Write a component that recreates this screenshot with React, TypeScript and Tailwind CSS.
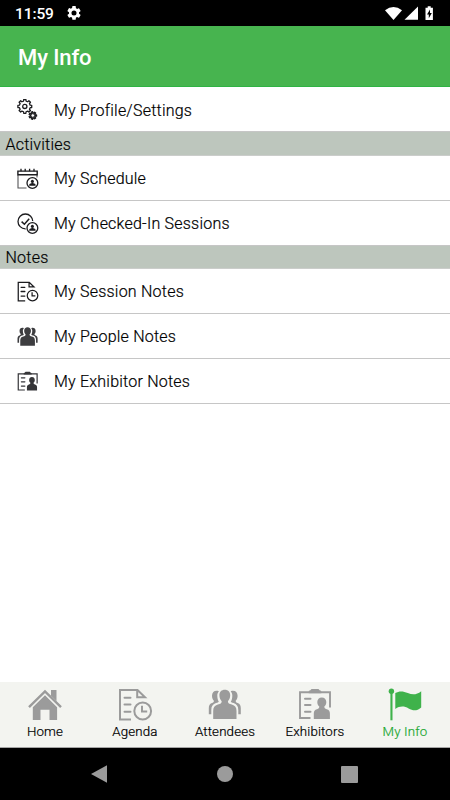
import type { ReactNode } from "react";

interface IconProps {
  className?: string;
}

// closed outline of a gear with `teeth` blunt teeth
function gearPath(cx: number, cy: number, inner: number, outer: number, teeth: number) {
  const step = (Math.PI * 2) / teeth;
  const points: string[] = [];
  for (let i = 0; i < teeth; i++) {
    const mid = i * step;
    const corners = [
      [inner, -0.29],
      [outer, -0.2],
      [outer, 0.2],
      [inner, 0.29],
    ];
    corners.forEach(([r, offset]) => {
      const a = mid + offset * step;
      points.push(`${(cx + r * Math.cos(a)).toFixed(2)} ${(cy + r * Math.sin(a)).toFixed(2)}`);
    });
  }
  return `M${points.join("L")}Z`;
}

function GearsIcon({ className }: IconProps) {
  return (
    <svg viewBox="0 0 22 22" className={className} fill="none" stroke="currentColor" strokeLinejoin="round">
      <path d={gearPath(7.8, 7.4, 5.5, 7, 8)} strokeWidth="1.3" />
      <circle cx="7.8" cy="7.4" r="2.1" strokeWidth="1.3" />
      <path d={gearPath(15.8, 16.5, 2.5, 3.8, 7)} strokeWidth="1.3" />
      <circle cx="15.8" cy="16.5" r="1.8" strokeWidth="0.9" />
    </svg>
  );
}

function PersonBadge() {
  return (
    <>
      <circle cx="15.4" cy="15" r="5.4" fill="white" strokeWidth="1.3" />
      <circle cx="15.4" cy="13.2" r="1.5" fill="currentColor" stroke="none" />
      <path d="M12.2 17.8v-.9c0-1 1.2-1.4 2.3-1.6v-1h1.8v1c1.1.2 2.3.6 2.3 1.6v.9z" fill="currentColor" stroke="none" />
    </>
  );
}

function ScheduleIcon({ className }: IconProps) {
  return (
    <svg viewBox="0 0 22 22" className={className} fill="none" stroke="currentColor">
      <path d="M1 7v13h8.5M20 7v2.5" strokeWidth="1.1" opacity=".75" />
      <path d="M.9 3.1h19.3v3.6H.9z" strokeWidth="1.4" />
      <path d="M4 .8v2.5M8.2.8v2.5M12.6.8v2.5M17 .8v2.5" strokeWidth="1.3" />
      <PersonBadge />
    </svg>
  );
}

function CheckedInIcon({ className }: IconProps) {
  return (
    <svg viewBox="0 0 22 22" className={className} fill="none" stroke="currentColor">
      <circle cx="8.4" cy="8.4" r="7.4" strokeWidth="1.3" />
      <path d="M4.6 8.6l2.8 2.6 4.8-5.4" strokeWidth="1.5" />
      <circle cx="15.4" cy="15" r="6.9" fill="white" stroke="none" />
      <PersonBadge />
    </svg>
  );
}

function AgendaIcon({ className }: IconProps) {
  return (
    <svg viewBox="0 0 35 33" className={className} fill="none" stroke="currentColor" strokeWidth="2">
      <path d="M13 31.5H2V2h17.5l7.5 7.3h-7.8V2" />
      <path d="M6.5 9.8h6M6.5 16.5h6M6.5 23.7h6" strokeLinecap="round" />
      <circle cx="24.7" cy="23" r="8.4" />
      <path d="M24 17.8v5.8h5.2" />
    </svg>
  );
}

function PeopleIcon({ className }: IconProps) {
  return (
    <svg viewBox="0 0 35 33" className={className} fill="currentColor">
      <path d="M16.8 1.8c3.3 0 5.4 2.2 5.4 5.5 0 2.6-1 4.6-2.3 6 0 2.1 1.3 2.5 3.9 3.3 3.3 1 4.7 2.7 4.7 6.3v8.2H5.2v-8.2c0-3.6 1.4-5.3 4.7-6.3 2.6-.8 3.8-1.2 3.8-3.3-1.3-1.4-2.3-3.4-2.3-6 0-3.3 2.1-5.5 5.4-5.5z" />
      <path d="M10.9 3.2C7.1 1.8 4 3.9 4 7.7c0 2 .6 3.7 1.9 5 0 1.4-.7 1.9-2 2.3C1.6 15.9.8 17.7.8 20.2v6.1h2.5v-4.2c0-4 1.7-6 4.7-7 1.6-.5 2.5-.8 2.8-1.3C9.8 12.2 9.3 10 9.3 7.5c0-1.6.6-3.2 1.6-4.3z" />
      <path d="M22.7 3.2c3.8-1.4 6.9.7 6.9 4.5 0 2-.6 3.7-1.9 5 0 1.4.7 1.9 2 2.3 2.3.9 3.1 2.7 3.1 5.2v6.1h-2.5v-4.2c0-4-1.7-6-4.7-7-1.6-.5-2.5-.8-2.8-1.3 1-1.6 1.5-3.8 1.5-6.3 0-1.6-.6-3.2-1.6-4.3z" />
    </svg>
  );
}

function ExhibitorIcon({ className }: IconProps) {
  return (
    <svg viewBox="0 0 35 33" className={className} fill="currentColor">
      <path d="M12.5 30H2V4.3h30v15.2" fill="none" stroke="currentColor" strokeWidth="1.9" />
      <path d="M10.7 5.2V3.4c0-.8.5-1 1.4-1 .7 0 .8-1.3 1.6-1.3h6.6c.8 0 .9 1.3 1.6 1.3.9 0 1.4.2 1.4 1v1.8z" />
      <path d="M7 10.7h5.5M7 17h5.5M7 23.7h5.5" stroke="currentColor" strokeWidth="2" strokeLinecap="round" />
      <path d="M23.8 9.5c2.7 0 4.5 1.8 4.5 4.5 0 2-.8 3.6-2 4.6 0 1.7.7 2.1 2.4 2.6 2.3.7 3.2 1.8 3.2 4.4V31H15.8v-5.4c0-2.6.9-3.7 3.2-4.4 1.6-.5 2.3-.9 2.3-2.6-1.2-1-2-2.6-2-4.6 0-2.7 1.8-4.5 4.5-4.5z" />
    </svg>
  );
}

function HomeIcon({ className }: IconProps) {
  return (
    <svg viewBox="0 0 35 33" className={className} fill="currentColor">
      <path d="M23 2h5.5v11.1L23 7.8z" />
      <path d="M1 19.2L17 3.5l16 15.7" fill="none" stroke="currentColor" strokeWidth="2.4" />
      <path d="M17 7.3l12.1 12V32h-7.6V21.8h-9V32H4.8V19.3z" />
    </svg>
  );
}

function FlagIcon({ className }: IconProps) {
  return (
    <svg viewBox="0 0 35 33" className={className} fill="currentColor">
      <circle cx="3.4" cy="3.2" r="2.7" />
      <path d="M2.4 4h2.1v28.3H2.4z" />
      <path d="M7.3 5.1c4-2.6 8.2-1.9 12.5-.1 4.5 1.9 8.8 2 13.4-1.8v16.2c-4.4 3.7-8.1 3.4-12.6 1-4.3-2.3-8.6-2.6-13.3.5z" />
    </svg>
  );
}

interface MenuRowProps {
  icon: ReactNode;
  label: string;
  className?: string;
}

function MenuRow({ icon, label, className = "pt-0.5" }: MenuRowProps) {
  return (
    <div className={`flex h-[45px] items-center border-b border-[#c6c6c6] pl-[17px] ${className}`}>
      <span className="flex w-[37px] items-center pb-px text-[#1c1c1f]">{icon}</span>
      <span className="text-[16px] font-light tracking-[0.22px] text-black [-webkit-text-stroke:0.2px]">
        {label}
      </span>
    </div>
  );
}

function SectionHeader({ title, className }: { title: string; className: string }) {
  return (
    <div
      className={`flex items-center border-b border-[#cbcdcb] bg-[#bdc6bd] pl-[5.5px] pt-0.5 text-[16px] font-light tracking-[0.22px] text-black [-webkit-text-stroke:0.2px] ${className}`}
    >
      {title}
    </div>
  );
}

const tabs = [
  { label: "Home", Icon: HomeIcon },
  { label: "Agenda", Icon: AgendaIcon },
  { label: "Attendees", Icon: PeopleIcon },
  { label: "Exhibitors", Icon: ExhibitorIcon },
  { label: "My Info", Icon: FlagIcon, active: true },
];

export default function App() {
  return (
    <div className="flex h-[800px] w-[450px] flex-col overflow-hidden bg-white font-[Roboto,sans-serif]">
      {/* Status bar */}
      <div className="flex h-[26px] items-center justify-between bg-black pl-[15px] pr-4 text-white">
        <div className="flex items-center gap-[13px] pt-0.5">
          <span className="pt-px text-[15.5px] font-medium leading-none tracking-[-0.1px]">11:59</span>
          <svg viewBox="2 2 20 20" className="mb-0.5 h-[14px] w-[14px]" fill="currentColor">
            <path d="M19.14 12.94a7 7 0 0 0 0-1.88l2.03-1.58a.5.5 0 0 0 .12-.61l-1.92-3.32a.5.5 0 0 0-.59-.22l-2.39.96a7 7 0 0 0-1.62-.94l-.36-2.54A.5.5 0 0 0 13.93 2h-3.84a.5.5 0 0 0-.48.41l-.36 2.54a7 7 0 0 0-1.62.94l-2.39-.96a.5.5 0 0 0-.59.22L2.74 8.87a.5.5 0 0 0 .12.61l2.03 1.58a7 7 0 0 0 0 1.88l-2.03 1.58a.5.5 0 0 0-.12.61l1.92 3.32c.12.22.37.29.59.22l2.39-.96a7 7 0 0 0 1.62.94l.36 2.54c.05.24.24.41.48.41h3.84c.24 0 .44-.17.47-.41l.36-2.54a7 7 0 0 0 1.62-.94l2.39.96c.22.08.47 0 .59-.22l1.92-3.32a.5.5 0 0 0-.12-.61zM12 15.6a3.6 3.6 0 1 1 0-7.2 3.6 3.6 0 0 1 0 7.2z" />
          </svg>
        </div>
        <svg viewBox="0 0 49 16" className="h-4 w-[49px]" fill="currentColor">
          <path d="M0 5.2Q8.5-1.2 17 5.2L8.5 15z" />
          <path d="M33 1.5v13.2H19.5z" />
          <path d="M40.5 2.8h2.2V1.2h3v1.6h2.2v12.2h-7.4z" />
          <path d="M45 4.6l-3 5h1.8v3.6l3-5.2H45z" fill="black" />
        </svg>
      </div>

      {/* App bar */}
      <header className="flex h-[61px] items-center border-b border-[#2fb344] bg-[#47b44f] pl-[18px] pt-0.5">
        <h1 className="text-[22px] font-medium tracking-[-0.1px] text-white">My Info</h1>
      </header>

      <main className="flex-1">
        <MenuRow
          icon={<GearsIcon className="h-[22px] w-[22px]" />}
          label="My Profile/Settings"
          className="pt-[3px]"
        />
        <SectionHeader title="Activities" className="h-6" />
        <MenuRow icon={<ScheduleIcon className="h-[22px] w-[22px]" />} label="My Schedule" />
        <MenuRow icon={<CheckedInIcon className="h-[22px] w-[22px]" />} label="My Checked-In Sessions" />
        <SectionHeader title="Notes" className="h-[23px]" />
        <MenuRow icon={<AgendaIcon className="h-[21px] w-[22px]" />} label="My Session Notes" />
        <MenuRow icon={<PeopleIcon className="h-[21px] w-[22px] text-[#3d3d40]" />} label="My People Notes" />
        <MenuRow icon={<ExhibitorIcon className="h-[21px] w-[22px] text-[#353538]" />} label="My Exhibitor Notes" />
      </main>

      {/* Tab bar */}
      <nav className="flex h-[66px] border-b border-[#a5a5a5] bg-[#f3f4f0]">
        {tabs.map(({ label, Icon, active }) => (
          <div
            key={label}
            className={`flex flex-1 flex-col items-center pt-1.5 ${active ? "text-[#3fb24b]" : "text-[#9b9b9b]"}`}
          >
            <Icon className="h-[33px] w-[35px]" />
            <span
              className={`mt-[3px] text-[13.3px] font-light leading-4 tracking-[0.15px] [-webkit-text-stroke:0.2px] ${active ? "text-[#22a832]" : "text-black"}`}
            >
              {label}
            </span>
          </div>
        ))}
      </nav>

      {/* System navigation */}
      <div className="flex h-[52px] items-center justify-between bg-black pl-[90px] pr-[92px] text-[#9b9b9b]">
        <svg viewBox="0 0 18 18" className="h-[18px] w-[18px]" fill="currentColor">
          <path d="M1 9L17 .2v17.6z" />
        </svg>
        <div className="h-4 w-4 rounded-full bg-[#9b9b9b]" />
        <div className="h-[17px] w-[17px] rounded-[1px] bg-[#9b9b9b]" />
      </div>
    </div>
  );
}
